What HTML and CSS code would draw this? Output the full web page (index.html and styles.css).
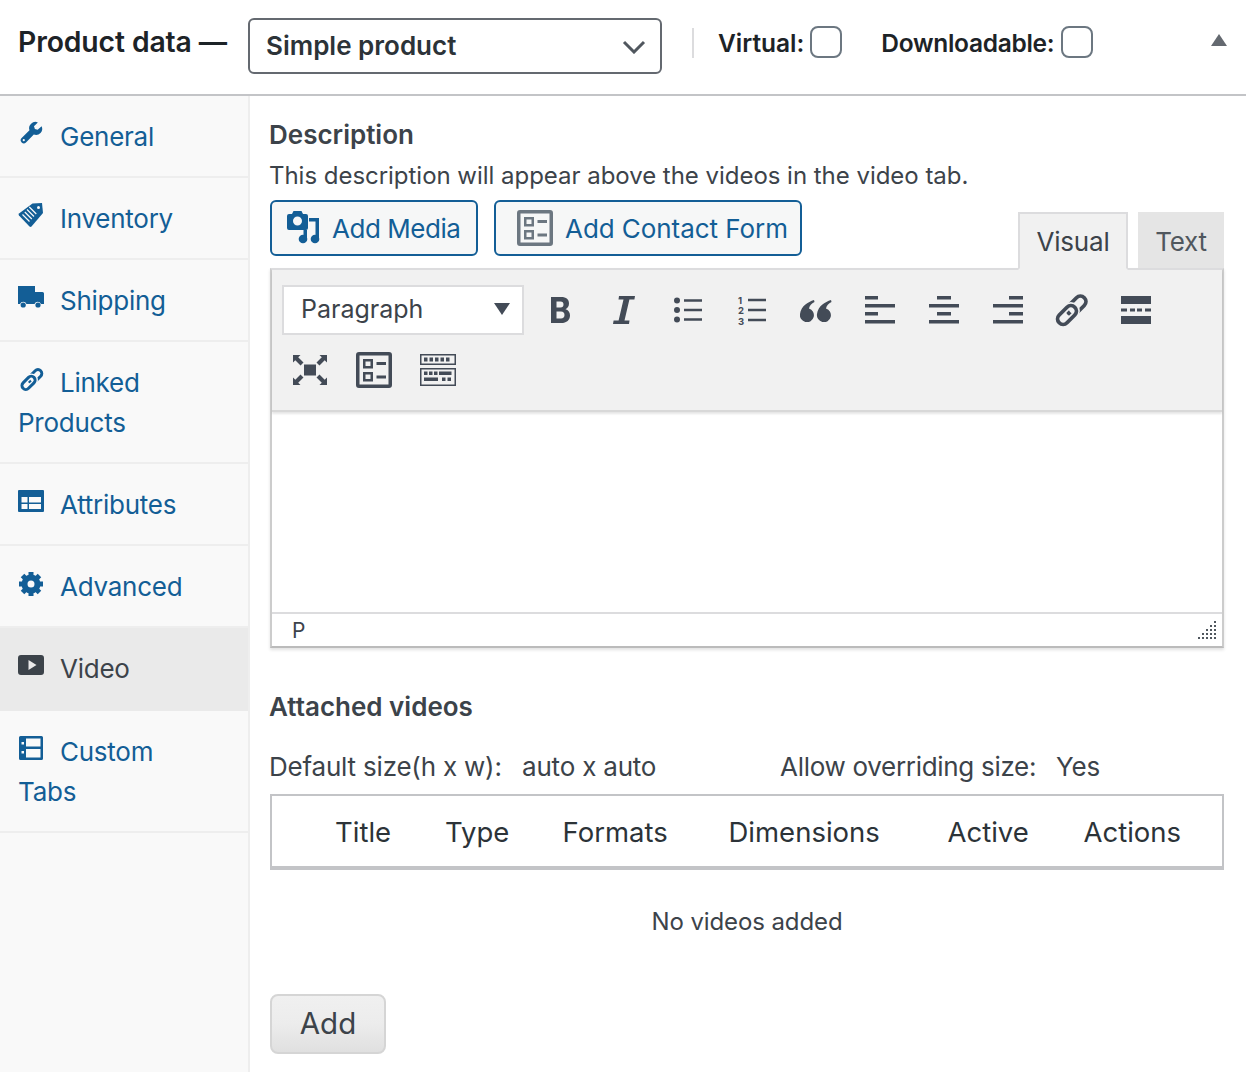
FILE: index.html
```html
<!DOCTYPE html>
<html lang="en">
<head>
<meta charset="utf-8">
<title>Product data</title>
<link rel="stylesheet" href="styles.css">
</head>
<body>
<div class="panel">
  <header class="head">
    <h2 class="head-title">Product data —</h2>
    <div class="type-select">
      <span>Simple product</span>
      <svg class="chevron" viewBox="0 0 24 14"><path d="M2 2l10 10L22 2" fill="none" stroke="#50575e" stroke-width="3"/></svg>
    </div>
    <span class="head-div"></span>
    <label class="check check-virtual">Virtual:<span class="box"></span></label>
    <label class="check check-down">Downloadable:<span class="box"></span></label>
    <svg class="collapse" viewBox="0 0 16 12"><path d="M8 0l8 12H0z" fill="#646970"/></svg>
  </header>
  <div class="body">
    <nav class="side">
      <a class="tab">
        <svg class="tab-icon" viewBox="-2 -2 26 26"><path transform="scale(.92)" fill-rule="evenodd" d="M23.500 4.500l-4.300 4-3-.9-1-3 4.200-4.100A6.800 6.800 0 0 0 10.300 9L1.800 17.500a3.300 3.300 0 0 0 4.700 4.700L15 13.700a6.800 6.800 0 0 0 8.500-9.200zM4.100 21a1.200 1.200 0 1 1 0-2.400 1.200 1.200 0 0 1 0 2.400z"/></svg>General
      </a>
      <a class="tab">
        <svg class="tab-icon" viewBox="0 0 26 26"><path d="M14.500 1.500L24 1l1 10-11.500 13.500a1.500 1.500 0 0 1-2 0L1 13.500a1.500 1.500 0 0 1 0-2z"/><path d="M4.500 12.500l7 7M6.800 10l7 7M9 7.500l7 7M11.300 5l7 7" stroke="#f9f9f9" stroke-width="1.200"/><circle cx="20.500" cy="5.500" r="1.500" fill="#f9f9f9"/></svg>Inventory
      </a>
      <a class="tab">
        <svg class="tab-icon" viewBox="0 0 26 26"><g transform="translate(0 2)"><path fill-rule="evenodd" d="M0 0h17v6h7.500a1.500 1.500 0 0 1 1.500 1.500V18h-3a3.500 3.500 0 0 0-6.500 0H8.500A3.500 3.500 0 0 0 2 18H0z"/><circle cx="5.200" cy="19" r="2.600"/><circle cx="20" cy="19" r="2.600"/></g></svg>Shipping
      </a>
      <a class="tab">
        <svg class="tab-icon" viewBox="-2 -1 37 37"><g fill="none" stroke-width="4.200"><rect x="11.500" y="8" width="22" height="11" rx="5.500" transform="rotate(-45 22.500 13.500)" stroke="currentColor"/><rect x="2" y="17.500" width="22" height="11" rx="5.500" transform="rotate(-45 13 23)" stroke="#f9f9f9" stroke-width="8"/><rect x="2" y="17.500" width="22" height="11" rx="5.500" transform="rotate(-45 13 23)" stroke="currentColor"/></g></svg>Linked Products
      </a>
      <a class="tab">
        <svg class="tab-icon" viewBox="0 0 26 26"><path fill-rule="evenodd" d="M1 2h24a1 1 0 0 1 1 1v20a1 1 0 0 1-1 1H1a1 1 0 0 1-1-1V3a1 1 0 0 1 1-1zM3.500 9v5.500h6V9zm7.500 0v5.500h12V9zM3.500 16v5h6v-5zm7.500 0v5h12v-5z"/></svg>Attributes
      </a>
      <a class="tab">
        <svg class="tab-icon" viewBox="-1 -2 26 26"><circle cx="12" cy="12" r="6.500" fill="none" stroke="currentColor" stroke-width="6"/><path d="M9.500 0h5v5h-5zM9.500 19h5v5h-5zM0 9.500h5v5H0zM19 9.500h5v5h-5z"/><path d="M9.500 0h5v5h-5zM9.500 19h5v5h-5zM0 9.500h5v5H0zM19 9.500h5v5h-5z" transform="rotate(45 12 12)"/></svg>Advanced
      </a>
      <a class="tab tab-active">
        <svg class="tab-icon" viewBox="0 0 26 26"><path transform="translate(0 3)" fill-rule="evenodd" d="M3 0h20a3 3 0 0 1 3 3v14a3 3 0 0 1-3 3H3a3 3 0 0 1-3-3V3a3 3 0 0 1 3-3zm7.500 5v10l8-5z"/></svg>Video
      </a>
      <a class="tab">
        <svg class="tab-icon" viewBox="-1 0 26 26"><path fill-rule="evenodd" d="M1.500 1h21A1.500 1.500 0 0 1 24 2.500v21a1.500 1.500 0 0 1-1.500 1.500h-21A1.500 1.500 0 0 1 0 23.500v-21A1.500 1.500 0 0 1 1.500 1zM2.500 7v2.500H5V7zm0 9v2.500H5V16zM7 3.500v8h14.500v-8zM7 14v8.500h14.500V14z"/></svg>Custom Tabs
      </a>
    </nav>
    <main class="content">
      <h3 class="label-strong">Description</h3>
      <p class="help">This description will appear above the videos in the video tab.</p>
      <div class="editor-top">
        <button class="wp-btn media-btn">
          <svg class="btn-icon-media" viewBox="0 0 34 34"><path fill-rule="evenodd" d="M6.500 0h8L16 3h3a2 2 0 0 1 2 2v12a2 2 0 0 1-2 2H2a2 2 0 0 1-2-2V5a2 2 0 0 1 2-2h3zM10.500 5.500a4.500 4.500 0 1 0 0 9 4.500 4.500 0 0 0 0-9z"/><path d="M22 7h10v21h-3.500V10.500H22zM16.500 19H20v9h-3.500z"/><circle cx="28" cy="28" r="4.300"/><circle cx="16" cy="28" r="4.300"/></svg>
          Add Media
        </button>
        <button class="wp-btn form-btn">
          <svg class="form-icon form-icon-grey" viewBox="0 0 36 36"><use href="#form-shape"/></svg>
          Add Contact Form
        </button>
        <div class="mode-tabs">
          <span class="mode mode-on">Visual</span>
          <span class="mode mode-off">Text</span>
        </div>
      </div>
      <div class="editor">
        <div class="toolbar">
          <div class="tb-row">
            <div class="format"><span>Paragraph</span><i class="caret"></i></div>
            <span class="tb"><svg viewBox="0 0 19 26" class="ic-b"><path fill-rule="evenodd" d="M0 0h10c5.500 0 8 2.500 8 6.500 0 2.800-1.500 4.800-3.500 5.700 2.800.8 4.500 3 4.500 6 0 4.700-3.200 7.800-9 7.800H0zM5.500 4.500v6h4c2 0 3-1.100 3-3s-1-3-3-3zM5.500 14.500v7H10c2.300 0 3.500-1.300 3.500-3.500s-1.200-3.500-3.500-3.500z"/></svg></span>
            <span class="tb"><svg viewBox="0 0 22 28" class="ic-i"><path d="M6 0h16l-.6 3.500h-5L11.500 24.500h5L16 28H0l.6-3.500h5L10.500 3.500h-5z"/></svg></span>
            <span class="tb"><svg viewBox="0 0 28 26" class="ic-list"><circle cx="3" cy="3.500" r="3"/><circle cx="3" cy="13" r="3"/><circle cx="3" cy="22.500" r="3"/><path d="M10 2.200h18v2.600H10zM10 11.700h18v2.600H10zM10 21.200h18v2.600H10z"/></svg></span>
            <span class="tb"><svg viewBox="0 0 28 30" class="ic-list ic-ol"><path d="M10 3.800h18v2.400H10zM10 13.800h18v2.400H10zM10 23.800h18v2.400H10z"/><text x="0" y="8.500" class="mini-num">1</text><text x="0" y="19" class="mini-num">2</text><text x="0" y="29.500" class="mini-num">3</text></svg></span>
            <span class="tb"><svg viewBox="0 0 32 24" class="ic-quote"><path d="M14 2C8 4 1 8 0 16a7 7 0 1 0 9-5.500c.5-3 2.500-5 5.500-6.500zM31 2c-6 2-13 6-14 14a7 7 0 1 0 9-5.500c.5-3 2.500-5 5.500-6.500z"/></svg></span>
            <span class="tb"><svg viewBox="0 0 30 28" class="ic-al"><path d="M0 0h13v3.500H0zM0 8h30v3.500H0zM0 16h13v3.500H0zM0 24h30v3.500H0z"/></svg></span>
            <span class="tb"><svg viewBox="0 0 30 28" class="ic-al"><path d="M8 0h14v3.500H8zM0 8h30v3.500H0zM8 16h14v3.500H8zM0 24h30v3.500H0z"/></svg></span>
            <span class="tb"><svg viewBox="0 0 30 28" class="ic-al"><path d="M16 0h14v3.500H16zM0 8h30v3.500H0zM16 16h14v3.500H16zM0 24h30v3.500H0z"/></svg></span>
            <span class="tb"><svg viewBox="0 0 36 36" class="ic-link"><g fill="none" stroke-width="3.800"><rect x="11.500" y="8" width="22" height="11" rx="5.500" transform="rotate(-45 22.500 13.500)" stroke="#434b57"/><rect x="2" y="17.500" width="22" height="11" rx="5.500" transform="rotate(-45 13 23)" stroke="#f1f1f1" stroke-width="7"/><rect x="2" y="17.500" width="22" height="11" rx="5.500" transform="rotate(-45 13 23)" stroke="#434b57"/></g></svg></span>
            <span class="tb"><svg viewBox="0 0 30 28" class="ic-al"><path d="M0 0h30v8H0zM0 20h30v8H0zM0 12.500h6v3H0zM9 12.500h5v3H9zM16 12.500h5v3h-5zM24 12.500h6v3h-6z"/></svg></span>
          </div>
          <div class="tb-row tb-row2">
            <span class="tb"><svg viewBox="0 0 34 30" class="ic-full"><rect x="11" y="9.500" width="12" height="11"/><path d="M0 0h7.500L5.200 2.300 10.500 7.500 7.500 10.500 2.300 5.200 0 7.500zM34 0v7.500l-2.300-2.300-5.200 5.300-3-3 5.300-5.200L26.500 0zM0 30v-7.500l2.300 2.300 5.200-5.300 3 3-5.300 5.200 2.300 2.300zM34 30h-7.500l2.300-2.300-5.300-5.200 3-3 5.200 5.300 2.300-2.300z"/></svg></span>
            <span class="tb"><svg viewBox="0 0 36 36" class="form-icon form-icon-dark"><use href="#form-shape"/></svg></span>
            <span class="tb"><svg viewBox="0 0 36 32" class="ic-kb"><path fill-rule="evenodd" d="M0 0h36v11H0zm1.500 1.500v8h33v-8zM0 14h36v18H0zm1.500 1.500v15h33v-15z"/><path d="M4 3.500h3.500v4H4zM9.500 3.500H13v4H9.500zM15 3.500h3.500v4H15zM20.500 3.500H24v4h-3.500zM26 3.500h3.500v4H26zM4 17.500h3.500v3.500H4zM9 17.500h3.500v3.500H9zM14 17.500h3.500v3.500H14zM19 17.500h12.500v3.500H19zM4 23.500h14v3.500H4zM22 23.500h3.500v3.500H22zM27.500 23.500H31v3.500h-3.500z"/></svg></span>
          </div>
        </div>
        <div class="editor-area"></div>
        <div class="status">
          <span>P</span>
          <svg class="grip" viewBox="0 0 18 18"><path d="M16 0h2v2h-2zM12 4h2v2h-2zM16 4h2v2h-2zM8 8h2v2H8zM12 8h2v2h-2zM16 8h2v2h-2zM4 12h2v2H4zM8 12h2v2H8zM12 12h2v2h-2zM16 12h2v2h-2zM0 16h2v2H0zM4 16h2v2H4zM8 16h2v2H8zM12 16h2v2h-2zM16 16h2v2h-2z"/></svg>
        </div>
      </div>
      <h3 class="label-strong attached">Attached videos</h3>
      <div class="defaults">
        <span class="d-a">Default size(h x w):</span><span class="d-b">auto x auto</span><span class="d-c">Allow overriding size:</span><span>Yes</span>
      </div>
      <div class="video-table">
        <span>Title</span><span>Type</span><span>Formats</span><span>Dimensions</span><span>Active</span><span>Actions</span>
      </div>
      <p class="empty">No videos added</p>
      <button class="add-btn">Add</button>
    </main>
  </div>
</div>
<svg class="defs" width="0" height="0"><defs><g id="form-shape"><path fill-rule="evenodd" d="M3 0h30a3 3 0 0 1 3 3v30a3 3 0 0 1-3 3H3a3 3 0 0 1-3-3V3a3 3 0 0 1 3-3zm.5 3.500v29h29v-29zM7 7h10v9.500H7zm2.500 2.500V14h5V9.500zM7 20h10v9.500H7zm2.500 2.500V27h5v-4.500zM20.500 10H30v3h-9.500zM20.500 23.500H30v3h-9.500z"/></g></defs></svg>
</body>
</html>
```
FILE: styles.css
```css
* { box-sizing: border-box; }
html, body { margin: 0; padding: 0; }
body {
  width: 1246px;
  height: 1072px;
  overflow: hidden;
  background: #fff;
  font-family: Inter, "Noto Sans", sans-serif;
  font-size: 26px;
  color: #3c434a;
}
.defs { position: absolute; }
.panel { display: flex; flex-direction: column; height: 100%; }

.head {
  height: 96px;
  flex: none;
  display: flex;
  align-items: center;
  border-bottom: 2px solid #c3c4c7;
  padding: 0 19px 2px 18px;
  color: #1d2327;
}
.head-title { margin: 0; width: 230px; font-size: 28.300px; font-weight: 600; letter-spacing: -.1px; position: relative; top: -4px; white-space: nowrap; }
.type-select {
  width: 414px;
  height: 56px;
  border: 2px solid #646970;
  border-radius: 6px;
  display: flex;
  align-items: center;
  justify-content: space-between;
  padding: 0 14px 2px 16px;
  font-weight: 600;
  color: #2c3338;
}
.chevron { width: 24px; height: 14px; margin-top: 4px; }
.head-div { width: 2px; height: 30px; background: #dcdcde; margin: 0 24px 0 30px; position: relative; top: -3px; }
.check {
  display: flex;
  align-items: center;
  gap: 6px;
  font-weight: 600;
  font-size: 24.500px;
  position: relative;
  top: -3px;
}
.check-virtual { margin-right: 40px; }
.check-down { letter-spacing: -.3px; gap: 7px; margin-left: -1px; }
.box { width: 32px; height: 32px; margin-top: -2px; border: 2px solid #6c7781; border-radius: 8px; background: #fff; }
.collapse { width: 16px; height: 12px; margin-left: auto; position: relative; top: -6px; }

.body { flex: 1; display: flex; min-height: 0; }
.side {
  width: 250px;
  flex: none;
  background: #f9f9f9;
  border-right: 2px solid #eee;
  display: flex;
  flex-direction: column;
}
.tab {
  display: block;
  padding: 21px 40px 19px 18px;
  line-height: 40px;
  border-bottom: 2px solid #eee;
  color: #135e96;
  font-size: 26px;
  letter-spacing: -.25px;
}
.tab-active { background: #eaeaea; color: #3c434a; border-bottom-color: #eaeaea; padding-bottom: 20px; }
.tab-icon { width: 26px; height: 26px; fill: currentColor; margin-right: 16px; vertical-align: 0; }

.content { flex: 1; min-width: 0; padding: 20px 22px 0 20px; }
.label-strong { margin: 0; font-size: 26px; font-weight: 600; line-height: 38px; color: #3c434a; text-indent: -1px; }
.help { margin: 2px 0 0; line-height: 40px; font-size: 24px; letter-spacing: -.03px; text-indent: -1px; }
.editor-top { display: flex; margin-top: 4px; height: 68px; align-items: flex-start; }
.wp-btn {
  height: 56px;
  display: flex;
  align-items: center;
  border: 2px solid #135e96;
  border-radius: 6px;
  background: #f6f7f7;
  color: #135e96;
  font: inherit;
  padding: 0;
}
.media-btn { width: 208px; padding-left: 15px; gap: 11px; letter-spacing: -.45px; }
.btn-icon-media { width: 34px; height: 34px; fill: #135e96; }
.form-btn { width: 308px; margin-left: 16px; padding-left: 21px; gap: 12px; letter-spacing: -.06px; }
.form-icon { width: 36px; height: 36px; }
.form-icon-grey { fill: #6c7781; }
.form-icon-dark { fill: #434b57; }
.mode-tabs { margin-left: auto; display: flex; gap: 10px; align-self: flex-start; margin-top: 12px; letter-spacing: -.2px; }
.mode { height: 58px; line-height: 56px; text-align: center; border: 2px solid #dcdcde; }
.mode-on { width: 110px; background: #f1f1f1; border-bottom-color: #f1f1f1; position: relative; z-index: 1; }
.mode-off { width: 86px; height: 56px; background: #e5e5e5; border-color: #e5e5e5; color: #50575e; }

.editor {
  border: 2px solid #dcdcde;
  box-shadow: 0 2px 3px rgba(0,0,0,.12);
  border-left-color: #ccc;
  border-right-color: #ccc;
  border-bottom-color: #bbb;
}
.toolbar { height: 142px; background: #f1f1f1; padding: 14px 0 0 6px; border-bottom: 2px solid #d8d8d8; box-shadow: 0 2px 2px rgba(0,0,0,.1); position: relative; }
.tb-row { display: flex; align-items: center; height: 52px; }
.tb-row2 { margin-top: 8px; }
.format {
  width: 242px;
  height: 50px;
  margin: 0 4px;
  background: #fff;
  border: 2px solid #dcdcde;
  display: flex;
  align-items: center;
  justify-content: space-between;
  padding: 0 12px 2px 17px;
  font-size: 25px;
  color: #3c434a;
}
.caret { width: 0; height: 0; border: 8px solid transparent; border-top: 12px solid #434b57; border-bottom: 0; }
.tb { width: 64px; height: 52px; display: flex; align-items: center; justify-content: center; }
.tb svg { fill: #434b57; }
.ic-b { width: 19px; height: 26px; }
.ic-i { width: 22px; height: 28px; }
.ic-list { width: 28px; height: 26px; }
.ic-ol { height: 30px; overflow: visible; }
.ic-quote { width: 32px; height: 24px; }
.ic-al { width: 30px; height: 28px; }
.ic-link { width: 36px; height: 36px; }
.ic-full { width: 34px; height: 30px; }
.ic-kb { width: 36px; height: 32px; }
.mini-num { font-size: 9.500px; font-weight: 700; font-family: Inter, sans-serif; }

.editor-area { height: 202px; background: #fff; border-bottom: 2px solid #dcdcde; }
.status { height: 32px; background: #fff; display: flex; align-items: center; justify-content: space-between; padding: 0 6px 0 20px; font-size: 21px; color: #3c434a; }
.grip { width: 18px; height: 18px; fill: #50575e; }

.attached { margin-top: 40px; }
.defaults { display: flex; margin-top: 22px; line-height: 38px; letter-spacing: -.2px; text-indent: -1px; }
.d-a { width: 252px; }
.d-b { width: 259px; text-indent: 0; }
.d-c { width: 276px; letter-spacing: -.3px; }
.video-table {
  display: grid;
  grid-template-columns: 110px 117.500px 166px 219px 136px auto;
  height: 76px;
  margin-top: 8px;
  padding: 2px 0 0 63px;
  align-items: center;
  border: 2px solid #c3c4c7;
  border-bottom-width: 4px;
  color: #2c3338;
  font-size: 27.500px;
}
.empty { margin: 30px 0 0; text-align: center; line-height: 44px; font-size: 24px; letter-spacing: -.1px; }
.add-btn {
  display: block;
  width: 116px;
  height: 60px;
  margin-top: 50px;
  padding: 0 0 2px;
  border: 2px solid #d5d5d5;
  border-radius: 8px;
  background: linear-gradient(#f0f0f0 0, #ececec 50%, #e0e0e0 100%);
  color: #3c434a;
  font: inherit;
  font-size: 29.500px;
}
```
